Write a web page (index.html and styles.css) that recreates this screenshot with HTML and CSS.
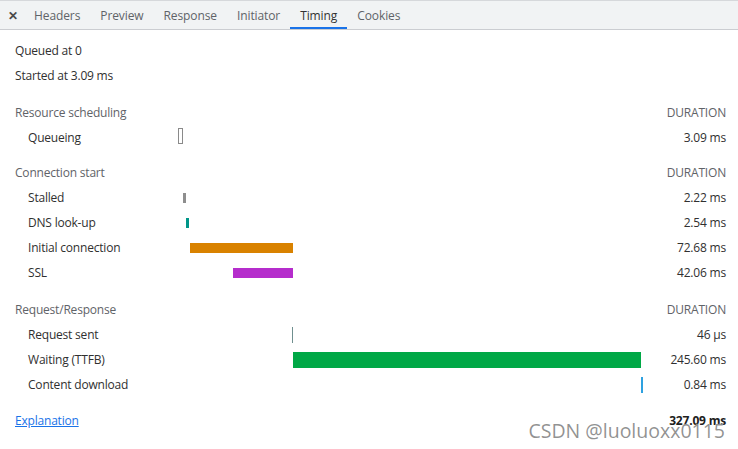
FILE: index.html
```html
<!DOCTYPE html>
<html>
<head>
<meta charset="utf-8">
<link rel="stylesheet" href="styles.css">
</head>
<body>
<div class="tabs">
  <span class="close">✕</span>
  <span class="tab">Headers</span>
  <span class="tab">Preview</span>
  <span class="tab">Response</span>
  <span class="tab">Initiator</span>
  <span class="tab active">Timing</span>
  <span class="tab">Cookies</span>
</div>
<div class="content">
  <div class="info">Queued at 0</div>
  <div class="info">Started at 3.09 ms</div>

  <div class="timing">
    <div class="row section wide">
      <div class="label">Resource scheduling</div>
      <div class="bars"></div>
      <div class="dur">DURATION</div>
    </div>
    <div class="row">
      <div class="label sub">Queueing</div>
      <div class="bars"><div class="bar tall queueing" style="margin-left:0%;width:1.075%"></div></div>
      <div class="dur val">3.09 ms</div>
    </div>

    <div class="row section narrow">
      <div class="label">Connection start</div>
      <div class="bars"></div>
      <div class="dur">DURATION</div>
    </div>
    <div class="row">
      <div class="label sub">Stalled</div>
      <div class="bars"><div class="bar short stalled" style="margin-left:1.075%;width:0.645%"></div></div>
      <div class="dur val">2.22 ms</div>
    </div>
    <div class="row">
      <div class="label sub">DNS look-up</div>
      <div class="bars"><div class="bar short dns" style="margin-left:1.72%;width:0.75%"></div></div>
      <div class="dur val">2.54 ms</div>
    </div>
    <div class="row">
      <div class="label sub">Initial connection</div>
      <div class="bars"><div class="bar short connecting" style="margin-left:2.58%;width:22.15%"></div></div>
      <div class="dur val">72.68 ms</div>
    </div>
    <div class="row">
      <div class="label sub">SSL</div>
      <div class="bars"><div class="bar short ssl" style="margin-left:11.83%;width:12.9%"></div></div>
      <div class="dur val">42.06 ms</div>
    </div>

    <div class="row section wide">
      <div class="label">Request/Response</div>
      <div class="bars"></div>
      <div class="dur">DURATION</div>
    </div>
    <div class="row">
      <div class="label sub">Request sent</div>
      <div class="bars"><div class="bar tall sending" style="margin-left:24.62%;width:1px"></div></div>
      <div class="dur val">46 μs</div>
    </div>
    <div class="row">
      <div class="label sub">Waiting (TTFB)</div>
      <div class="bars"><div class="bar tall waiting" style="margin-left:24.73%;width:74.84%"></div></div>
      <div class="dur val">245.60 ms</div>
    </div>
    <div class="row">
      <div class="label sub">Content download</div>
      <div class="bars"><div class="bar tall receiving" style="margin-left:99.57%;width:2px"></div></div>
      <div class="dur val">0.84 ms</div>
    </div>

    <div class="row section">
      <div class="label"><a class="link" href="#">Explanation</a></div>
      <div class="bars"></div>
      <div class="dur sum">327.09 ms</div>
    </div>
  </div>
</div>
<div class="watermark">CSDN @luoluoxx0115</div>
</body>
</html>
```

FILE: styles.css
```css
html, body {
  margin: 0;
  padding: 0;
  background: #ffffff;
}
body {
  width: 738px;
  height: 449px;
  overflow: hidden;
  position: relative;
  font-family: "Open Sans", "Noto Sans", sans-serif;
  font-size: 12px;
  color: #303030;
}
.tabs {
  display: flex;
  align-items: stretch;
  background: #f1f3f4;
  border-top: 1px solid #d6d8db;
  border-bottom: 1px solid #cbcdd1;
  box-sizing: border-box;
  height: 30px;
}
.close {
  width: 23px;
  display: flex;
  align-items: center;
  justify-content: center;
  font-size: 12px;
  font-weight: 700;
  color: #4a4a4a;
  padding-left: 1px;
}
.tab {
  display: flex;
  align-items: center;
  padding: 0 10px;
  color: #5f6368;
  letter-spacing: -0.1px;
}
.tab.active {
  color: #333333;
  box-shadow: inset 0 -2px 0 #1a73e8;
}
.content {
  padding: 8px 12px 0 15px;
}
.info {
  height: 25px;
  line-height: 25px;
  letter-spacing: -0.2px;
}
.row {
  display: grid;
  grid-template-columns: 163px 465px 1fr;
  height: 25px;
  align-items: center;
}
.row.section {
  margin-top: 11px;
}
.row.section.wide {
  margin-top: 12px;
}
.row.section.narrow {
  margin-top: 10px;
}
.label {
  color: #5f6368;
  letter-spacing: -0.2px;
  white-space: nowrap;
}
.label.sub {
  color: #303030;
  padding-left: 13px;
}
.bars {
  display: flex;
  align-items: center;
  height: 25px;
}
.bar {
  flex: none;
  box-sizing: border-box;
}
.bar.tall {
  height: 16px;
}
.bar.short {
  height: 10px;
}
.bar.queueing {
  border: 1px solid #8a8a8a;
  background: #ffffff;
  margin-top: -4px;
}
.bar.stalled { background: #8e8e8e; }
.bar.dns { background: #009688; }
.bar.connecting { background: #d98200; }
.bar.ssl { background: #b52dcc; }
.bar.sending { background: #6f8f8f; }
.bar.waiting { background: #00a846; }
.bar.receiving { background: #2ea1e0; }
.dur {
  text-align: right;
  color: #5f6368;
  letter-spacing: -0.2px;
  white-space: nowrap;
}
.dur.val {
  color: #303030;
}
.dur.sum {
  font-weight: 700;
  color: #202020;
}
.link {
  color: #1a73e8;
  text-decoration: underline;
}
.watermark {
  position: absolute;
  right: 13px;
  bottom: 5px;
  font-family: "Open Sans", "Noto Sans", sans-serif;
  font-size: 19.5px;
  color: rgba(110, 110, 110, 0.75);
  letter-spacing: 0px;
  text-shadow: 0 0 1px #ffffff;
}
```
